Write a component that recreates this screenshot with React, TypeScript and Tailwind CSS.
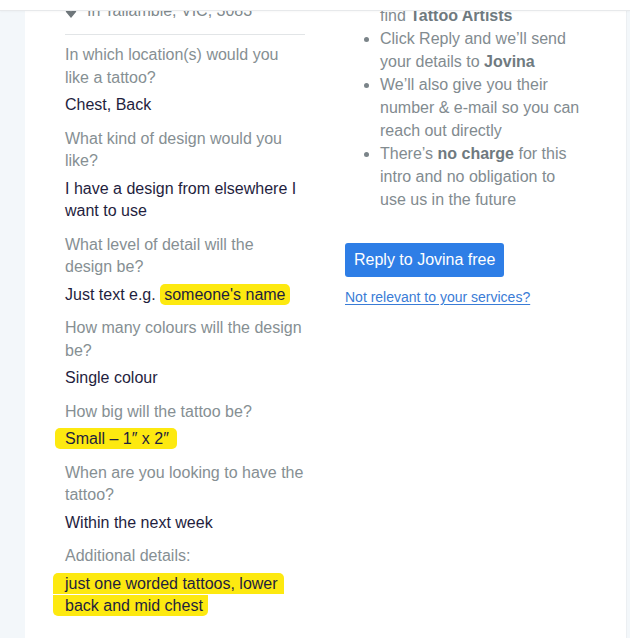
type Answer = {
  label: string[];
  value: React.ReactNode;
};

const hl = "inline-block rounded-[5px] bg-[#fde910] leading-[21px]";

const answers: Answer[] = [
  { label: ["In which location(s) would you", "like a tattoo?"], value: "Chest, Back" },
  {
    label: ["What kind of design would you", "like?"],
    value: (
      <>
        I have a design from elsewhere I<br />
        want to use
      </>
    ),
  },
  {
    label: ["What level of detail will the", "design be?"],
    value: (
      <>
        Just text e.g. <span className={`${hl} pl-[4px] pr-[4px]`}>someone's name</span>
      </>
    ),
  },
  { label: ["How many colours will the design", "be?"], value: "Single colour" },
  { label: ["How big will the tattoo be?"], value: <span className={`${hl} -ml-[10px] pl-[10px] pr-[8px]`}>Small – 1″ x 2″</span> },
  { label: ["When are you looking to have the", "tattoo?"], value: "Within the next week" },
  {
    label: ["Additional details:"],
    value: (
      <>
        <span className={`${hl} -ml-[12px] pl-[12px] pr-[6px] rounded-b-none`}>just one worded tattoos, lower</span>
        <br />
        <span className={`${hl} -ml-[12px] pl-[12px] pr-[5px] rounded-t-none`}>back and mid chest</span>
      </>
    ),
  },
];

function PinIcon() {
  return (
    <svg width="12" height="14" viewBox="0 0 12 14" className="shrink-0">
      <path d="M6 14 L1.2 8.2 A5.5 5.5 0 1 1 10.8 8.2 Z" fill="#6f777b" />
      <circle cx="6" cy="5.2" r="2" fill="#fff" />
    </svg>
  );
}

export default function App() {
  return (
    <div className="relative h-[638px] w-[630px] overflow-hidden bg-[#f3f7fa] font-['Liberation_Sans',Arial,sans-serif] text-[16px]">
      <div className="absolute inset-x-0 top-0 z-10 h-[11px] border-b border-[#e7e9eb] bg-white shadow-[0_1px_2px_rgba(0,0,0,0.03)]" />

      <div className="ml-[25px] mr-[3px] flex h-full gap-10 border-r border-[#eceff2] bg-white pl-10 pr-[38px]">
        {/* enquiry answers */}
        <div className="-mt-[1px] w-[240px] shrink-0">
          <div className="flex items-center gap-[10px] pb-[12px] leading-[23px] text-[#80898d]">
            <PinIcon />
            <span>In Tallambie, VIC, 3083</span>
          </div>
          <div className="h-px bg-[#e2e5e7]" />

          <div className="mt-[9px]">
            {answers.map((a, i) => (
              <div key={i} className="mb-[11px]">
                <p className="mb-[5px] leading-[22.5px] text-[#868f93]">
                  {a.label.map((l, j) => (
                    <span key={j} className="block">
                      {l}
                    </span>
                  ))}
                </p>
                <p className="leading-[22.5px] text-[#1f1e3e]">{a.value}</p>
              </div>
            ))}
          </div>
        </div>

        {/* how it works */}
        <div className="-mt-[17.5px] w-[240px] shrink-0">
          <ul className="list-disc pl-[35px] leading-[22.9px] text-[#828b90] marker:text-[#7b8489]">
            <li>
              Jovina is looking to
              <br />
              find <b className="text-[#6f7a7f]">Tattoo Artists</b>
            </li>
            <li>
              Click Reply and we’ll send
              <br />
              your details to <b className="text-[#6f7a7f]">Jovina</b>
            </li>
            <li>
              We’ll also give you their
              <br />
              number &amp; e-mail so you can
              <br />
              reach out directly
            </li>
            <li>
              There’s <b className="text-[#6f7a7f]">no charge</b> for this
              <br />
              intro and no obligation to
              <br />
              use us in the future
            </li>
          </ul>

          <button className="mt-[31.5px] block h-[34px] rounded-[3px] bg-[#2e7ee6] px-[9px] leading-[34px] text-white">
            Reply to Jovina free
          </button>
          <a href="#" className="mt-[10px] block text-[14px] leading-[20px] text-[#3a7cd6] underline underline-offset-2">
            Not relevant to your services?
          </a>
        </div>
      </div>
    </div>
  );
}
